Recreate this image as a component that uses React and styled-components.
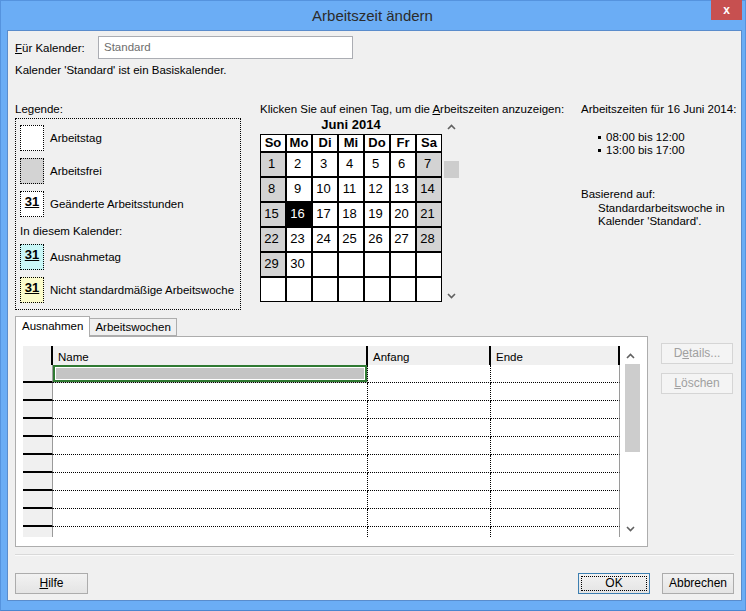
import React from 'react';
import styled, { createGlobalStyle } from 'styled-components';

const DAY_NAMES = ['So', 'Mo', 'Di', 'Mi', 'Do', 'Fr', 'Sa'];
const SELECTED_DAY = 16;
const GRID_ROWS = 10;

const GlobalStyle = createGlobalStyle`
  html, body {
    margin: 0;
    padding: 0;
  }
  body {
    font-family: "Liberation Sans", Arial, sans-serif;
    font-size: 11.5px;
    color: #000;
  }
`;

const Frame = styled.div`
  width: 746px;
  height: 611px;
  box-sizing: border-box;
  background: #6badf5;
  border: 1px solid #5593de;
  border-bottom-color: #4a86cf;
  padding: 0 3px 9px 6px;
  display: flex;
  flex-direction: column;
`;

const TitleBar = styled.div`
  height: 29px;
  display: grid;
  grid-template-columns: 1fr auto 1fr;
  align-items: start;
`;

const Title = styled.div`
  grid-column: 2;
  font-size: 15px;
  color: #2b2b2b;
  line-height: 29px;
  margin-left: -4px;
`;

const CloseButton = styled.div`
  grid-column: 3;
  justify-self: end;
  width: 31px;
  height: 20px;
  margin-top: -1px;
  background: #c75050;
  color: #fff;
  font-weight: bold;
  font-size: 12px;
  display: flex;
  align-items: center;
  justify-content: center;
`;

const Client = styled.div`
  flex: 1;
  background: #f0f0f0;
  border: 1px solid #5a8ccc;
  padding: 0 7px;
  display: flex;
  flex-direction: column;
`;

const TopRow = styled.div`
  margin-top: 5px;
  height: 23px;
  display: flex;
  align-items: center;
`;

const FieldLabel = styled.div`
  width: 83px;
`;

const Input = styled.div`
  width: 255px;
  height: 23px;
  box-sizing: border-box;
  border: 1px solid #abadb3;
  background: #fff;
  color: #6d6d6d;
  padding: 4px 5px;
`;

const InfoLine = styled.div`
  margin-top: 5px;
  line-height: 13px;
`;

const Main = styled.div`
  margin-top: 25px;
  display: grid;
  grid-template-columns: 245px 321px 1fr;
`;

const Caption = styled.div`
  line-height: 14px;
  white-space: nowrap;
`;

const LegendBox = styled.div`
  width: 226px;
  height: 192px;
  box-sizing: border-box;
  margin-top: 2px;
  border: 1px dotted #000;
  padding: 6px 4px;
`;

const LegendItem = styled.div`
  display: flex;
  align-items: center;
  gap: 6px;
  height: 26px;
  white-space: nowrap;
  margin-bottom: ${p => (p.$last ? 0 : 7)}px;
`;

const Swatch = styled.div`
  width: 24px;
  height: 26px;
  flex-shrink: 0;
  box-sizing: border-box;
  border: 1px dotted #000;
  background: ${p => p.$bg};
  font-size: 13px;
  font-weight: bold;
  text-decoration: underline;
  text-align: center;
  line-height: 20px;
`;

const LegendSub = styled.div`
  line-height: 14px;
  margin: 0 0 6px 0;
`;

const CalendarWrap = styled.div`
  display: flex;
  margin-top: 1px;
`;

const CalendarCol = styled.div`
  width: 182px;
`;

const MonthTitle = styled.div`
  height: 18px;
  font-size: 13px;
  font-weight: bold;
  text-align: center;
  line-height: 18px;
  margin-top: -1px;
`;

const DayGrid = styled.div`
  display: grid;
  grid-template-columns: repeat(7, 24px);
  grid-template-rows: 16px repeat(6, 23px);
  gap: 2px;
  padding: 1px;
  background: #000;
`;

const HeadCell = styled.div`
  background: #fff;
  font-size: 13px;
  font-weight: bold;
  text-align: center;
  line-height: 16px;
`;

const DayCell = styled.div`
  background: ${p => (p.$selected ? '#000' : p.$weekend ? '#d3d3d3' : '#fff')};
  color: ${p => (p.$selected ? '#fff' : '#000')};
  font-size: 13px;
  text-align: center;
  padding: 3px 3px 0 0;
  line-height: 16px;
`;

const VScroll = styled.div`
  width: 15px;
  margin-left: 2px;
  margin-top: 1px;
  height: 185px;
  display: flex;
  flex-direction: column;
  align-items: center;
`;

const Arrow = styled.svg`
  width: 9px;
  height: 6px;
  margin: ${p => p.$m};
  flex-shrink: 0;
`;

const Thumb = styled.div`
  width: ${p => p.$w}px;
  height: ${p => p.$h}px;
  background: #cdcdcd;
  margin-top: ${p => p.$top}px;
  align-self: ${p => p.$align || 'center'};
`;

const Spacer = styled.div`
  flex: 1;
`;

const HoursList = styled.div`
  margin-top: 15px;
  padding-left: 17px;
  line-height: 13px;
`;

const Bullet = styled.span`
  display: inline-block;
  width: 3px;
  height: 3px;
  background: #000;
  margin: 0 5px 2px 0;
`;

const BasedOn = styled.div`
  margin-top: 30px;
  line-height: 14px;
`;

const BasedText = styled.div`
  padding-left: 17px;
  line-height: 13px;
  margin-top: 1px;
`;

const TabArea = styled.div`
  margin-top: 6px;
  display: flex;
`;

const TabColumn = styled.div`
  width: 633px;
  display: flex;
  flex-direction: column;
`;

const TabStrip = styled.div`
  display: flex;
  align-items: flex-end;
  height: 20px;
  position: relative;
  z-index: 1;
`;

const Tab = styled.div`
  box-sizing: border-box;
  height: ${p => (p.$active ? 21 : 18)}px;
  margin-bottom: ${p => (p.$active ? -1 : 0)}px;
  padding: 0 ${p => (p.$active ? 6 : 5)}px;
  border: 1px solid #adadad;
  border-bottom: ${p => (p.$active ? 'none' : '1px solid #adadad')};
  border-left: ${p => (p.$active ? '1px solid #adadad' : 'none')};
  background: ${p => (p.$active ? '#fff' : '#f0f0f0')};
  line-height: ${p => (p.$active ? 18 : 16)}px;
`;

const Panel = styled.div`
  height: 211px;
  box-sizing: border-box;
  border: 1px solid #adadad;
  background: #fff;
  padding: 9px 7px;
`;

const Grid = styled.div`
  height: 191px;
  display: flex;
  overflow: hidden;
`;

const GridBody = styled.div`
  width: 597px;
  display: grid;
  grid-template-columns: 30px 315px 123px 129px;
  grid-auto-rows: 18px;
  grid-template-rows: 19px;
  align-content: start;
`;

const HeaderCell = styled.div`
  background: #f0f0f0;
  border-right: 2px solid #000;
  box-sizing: border-box;
  padding: 4px 0 0 5px;
  line-height: 14px;
`;

const RowHead = styled.div`
  background: #f0f0f0;
  border-bottom: 2px solid #000;
  border-right: 1px solid #9a9a9a;
  box-sizing: border-box;
`;

const Cell = styled.div`
  box-sizing: border-box;
  border-bottom: 1px dotted #000;
  border-right: ${p => (p.$last ? '1px solid #9a9a9a' : '1px dotted #000')};
  background: ${p => (p.$active ? '#c4c4c4' : '#fff')};
  box-shadow: ${p => (p.$active ? 'inset 0 0 0 2px #2f7a32, inset 0 0 0 3px #fff' : 'none')};
`;

const GridScroll = styled.div`
  width: 20px;
  display: flex;
  flex-direction: column;
  align-items: center;
  background: #fff;
`;

const SideButtons = styled.div`
  margin: 27px 0 0 13px;
  display: flex;
  flex-direction: column;
  gap: 9px;
`;

const Button = styled.div`
  width: ${p => p.$w || 72}px;
  height: 21px;
  box-sizing: border-box;
  border: 1px solid ${p => (p.$default ? '#3c7fb1' : p.$disabled ? '#d5d5d5' : '#acacac')};
  background: ${p => (p.$disabled ? '#f4f4f4' : 'linear-gradient(#f2f2f2, #e4e4e4)')};
  color: ${p => (p.$disabled ? '#a0a0a0' : '#000')};
  font-size: 12px;
  text-align: center;
  line-height: 19px;
  outline: ${p => (p.$default ? '1px dotted #000' : 'none')};
  outline-offset: -4px;
`;

const Separator = styled.div`
  margin-top: 7px;
  height: 1px;
  background: #d9d9d9;
  border-bottom: 1px solid #fafafa;
`;

const ButtonRow = styled.div`
  margin-top: 17px;
  display: flex;
  gap: 12px;
`;

const Chevron = ({ up, m }) => (
  <Arrow viewBox="0 0 9 6" $m={m}>
    <polyline
      points={up ? '1,5 4.5,1.5 8,5' : '1,1 4.5,4.5 8,1'}
      fill="none"
      stroke="#606060"
      strokeWidth="1.6"
    />
  </Arrow>
);

const buildDays = () => {
  const cells = [];
  for (let i = 0; i < 42; i++) {
    const day = i + 1;
    const col = i % 7;
    cells.push({
      day: day <= 30 ? day : null,
      weekend: day <= 30 && (col === 0 || col === 6),
    });
  }
  return cells;
};

const LEGEND = [
  { bg: '#fff', label: 'Arbeitstag' },
  { bg: '#d3d3d3', label: 'Arbeitsfrei' },
  { bg: '#fff', label: 'Geänderte Arbeitsstunden', num: true },
];

const LEGEND_CAL = [
  { bg: '#c9f6f6', label: 'Ausnahmetag' },
  { bg: '#fbfbcb', label: 'Nicht standardmäßige Arbeitswoche' },
];

export default function App() {
  const days = buildDays();

  return (
    <>
      <GlobalStyle />
      <Frame>
        <TitleBar>
          <Title>Arbeitszeit ändern</Title>
          <CloseButton>x</CloseButton>
        </TitleBar>
        <Client>
          <TopRow>
            <FieldLabel><u>F</u>ür Kalender:</FieldLabel>
            <Input>Standard</Input>
          </TopRow>
          <InfoLine>Kalender 'Standard' ist ein Basiskalender.</InfoLine>

          <Main>
            <div>
              <Caption>Legende:</Caption>
              <LegendBox>
                {LEGEND.map(item => (
                  <LegendItem key={item.label}>
                    <Swatch $bg={item.bg}>{item.num ? '31' : ''}</Swatch>
                    {item.label}
                  </LegendItem>
                ))}
                <LegendSub>In diesem Kalender:</LegendSub>
                {LEGEND_CAL.map((item, i) => (
                  <LegendItem key={item.label} $last={i === LEGEND_CAL.length - 1}>
                    <Swatch $bg={item.bg}>31</Swatch>
                    {item.label}
                  </LegendItem>
                ))}
              </LegendBox>
            </div>

            <div>
              <Caption>Klicken Sie auf einen Tag, um die <u>A</u>rbeitszeiten anzuzeigen:</Caption>
              <CalendarWrap>
                <CalendarCol>
                  <MonthTitle>Juni 2014</MonthTitle>
                  <DayGrid>
                    {DAY_NAMES.map(d => <HeadCell key={d}>{d}</HeadCell>)}
                    {days.map((c, i) => (
                      <DayCell key={i} $weekend={c.weekend} $selected={c.day === SELECTED_DAY}>
                        {c.day}
                      </DayCell>
                    ))}
                  </DayGrid>
                </CalendarCol>
                <VScroll>
                  <Chevron up m="6px 0 0 0" />
                  <Thumb $w={15} $h={17} $top={31} />
                  <Spacer />
                  <Chevron m="0 0 4px 0" />
                </VScroll>
              </CalendarWrap>
            </div>

            <div>
              <Caption>Arbeitszeiten für 16 Juni 2014:</Caption>
              <HoursList>
                <div><Bullet />08:00 bis 12:00</div>
                <div><Bullet />13:00 bis 17:00</div>
              </HoursList>
              <BasedOn>Basierend auf:</BasedOn>
              <BasedText>
                Standardarbeitswoche in
                <br />
                Kalender 'Standard'.
              </BasedText>
            </div>
          </Main>

          <TabArea>
            <TabColumn>
              <TabStrip>
                <Tab $active>Ausnahmen</Tab>
                <Tab>Arbeitswochen</Tab>
              </TabStrip>
              <Panel>
                <Grid>
                  <GridBody>
                    <HeaderCell />
                    <HeaderCell>Name</HeaderCell>
                    <HeaderCell>Anfang</HeaderCell>
                    <HeaderCell>Ende</HeaderCell>
                    {Array.from({ length: GRID_ROWS }).map((_, r) => (
                      <React.Fragment key={r}>
                        <RowHead />
                        <Cell $active={r === 0} />
                        <Cell />
                        <Cell $last />
                      </React.Fragment>
                    ))}
                  </GridBody>
                  <GridScroll>
                    <Chevron up m="7px 0 0 0" />
                    <Thumb $w={15} $h={88} $top={5} $align="flex-end" />
                    <Spacer />
                    <Chevron m="0 0 5px 0" />
                  </GridScroll>
                </Grid>
              </Panel>
            </TabColumn>
            <SideButtons>
              <Button $disabled>D<u>e</u>tails...</Button>
              <Button $disabled><u>L</u>öschen</Button>
            </SideButtons>
          </TabArea>

          <Separator />

          <ButtonRow>
            <Button $w={73}><u>H</u>ilfe</Button>
            <Spacer />
            <Button $default>OK</Button>
            <Button>Abbrechen</Button>
          </ButtonRow>
        </Client>
      </Frame>
    </>
  );
}
